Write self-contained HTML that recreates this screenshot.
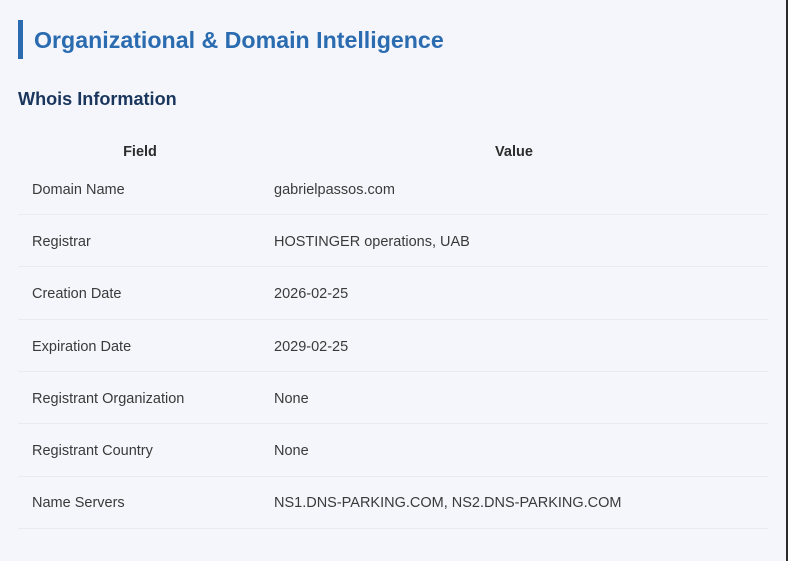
<!DOCTYPE html>
<html>
<head>
<meta charset="utf-8">
<style>
html,body{margin:0;padding:0;width:788px;height:561px;overflow:hidden;background:#f4f6fb;font-family:"Liberation Sans",sans-serif;}
#p{position:relative;width:788px;height:561px;overflow:hidden;}
.strip{position:absolute;left:786px;top:0;width:2px;height:561px;background:#2b2b2b;}
.bar{position:absolute;left:18px;top:20px;width:5px;height:39px;background:#2b6cb0;}
h1{position:absolute;margin:0;left:34px;top:26px;font-size:23.2px;line-height:28px;font-weight:700;color:#2b6cb0;white-space:nowrap;}
h2{position:absolute;margin:0;left:18px;top:88px;font-size:18.08px;line-height:22px;font-weight:700;color:#1a365d;white-space:nowrap;}
.t{position:absolute;font-size:14.5px;line-height:20px;color:#3a3a3a;white-space:nowrap;}
.h{position:absolute;font-size:14.5px;line-height:20px;font-weight:700;color:#2d2d2d;text-align:center;top:142px;}
.l{position:absolute;left:18px;width:750px;height:1px;background:#e8ebf1;}
</style>
</head>
<body>
<div id="p">
<div class="bar"></div>
<h1>Organizational &amp; Domain Intelligence</h1>
<h2>Whois Information</h2>
<div class="h" style="left:19px;width:242px;">Field</div>
<div class="h" style="left:260px;width:508px;">Value</div>

<div class="t" style="left:32px;top:180px;">Domain Name</div>
<div class="t" style="left:274px;top:180px;">gabrielpassos.com</div>
<div class="l" style="top:214px;"></div>

<div class="t" style="left:32px;top:232px;">Registrar</div>
<div class="t" style="left:274px;top:232px;">HOSTINGER operations, UAB</div>
<div class="l" style="top:266px;"></div>

<div class="t" style="left:32px;top:284px;">Creation Date</div>
<div class="t" style="left:274px;top:284px;">2026-02-25</div>
<div class="l" style="top:319px;"></div>

<div class="t" style="left:32px;top:337px;">Expiration Date</div>
<div class="t" style="left:274px;top:337px;">2029-02-25</div>
<div class="l" style="top:371px;"></div>

<div class="t" style="left:32px;top:389px;">Registrant Organization</div>
<div class="t" style="left:274px;top:389px;">None</div>
<div class="l" style="top:423px;"></div>

<div class="t" style="left:32px;top:441px;">Registrant Country</div>
<div class="t" style="left:274px;top:441px;">None</div>
<div class="l" style="top:476px;"></div>

<div class="t" style="left:32px;top:493px;">Name Servers</div>
<div class="t" style="left:274px;top:493px;">NS1.DNS-PARKING.COM, NS2.DNS-PARKING.COM</div>
<div class="l" style="top:528px;"></div>

<div class="strip"></div>
</div>
</body>
</html>
